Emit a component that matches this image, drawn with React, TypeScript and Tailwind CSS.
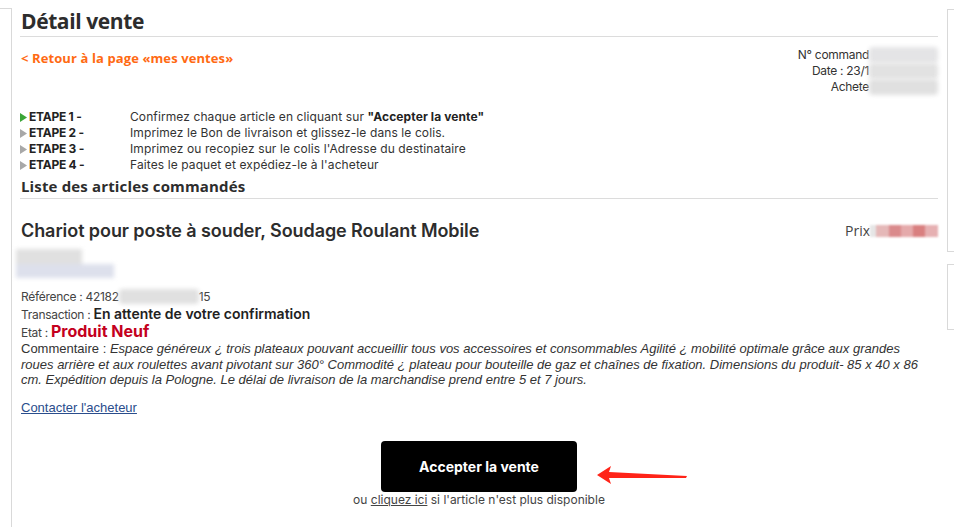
import React from "react";

function Tri({ green }: { green?: boolean }) {
  return (
    <svg width="7" height="9" viewBox="0 0 7 9" className="mr-[2px] shrink-0">
      <path d="M0 0 L7 4.5 L0 9 Z" fill={green ? "#3aa538" : "#a8a8a8"} />
    </svg>
  );
}

function Step({ n, green, children }: { n: number; green?: boolean; children: React.ReactNode }) {
  return (
    <div className="flex items-center h-[16px]">
      <div className="flex items-center w-[110px]" style={{ letterSpacing: "-0.25px" }}>
        <Tri green={green} />
        <span className="font-bold text-[#222]">ETAPE {n} -</span>
      </div>
      <div className="text-[#333]" style={{ letterSpacing: "0.1px" }}>{children}</div>
    </div>
  );
}

export default function App() {
  return (
    <div
      className="w-[954px] h-[527px] overflow-hidden bg-white flex text-[#333]"
      style={{ fontFamily: "Inter, 'Liberation Sans', sans-serif" }}
    >
      {/* left cut-off panel */}
      <div className="w-[12px] shrink-0 mt-[8px] border-t border-r border-[#d9d9d9]" />

      {/* main */}
      <div className="w-[926px] shrink-0 pl-[8px] pt-[8px]">
        <h1
          className="text-[21px] leading-[26px] font-bold text-[#2d2d2d] pb-[2px] border-b border-[#dcdcdc] pl-[1px]"
          style={{ fontFamily: "'Open Sans', sans-serif", letterSpacing: "-0.4px" }}
        >
          Détail vente
        </h1>

        <div className="flex justify-between">
          <a
            className="mt-[12px] text-[13px] leading-[18px] font-bold text-[#ff6a13] pl-[1px]"
            style={{ fontFamily: "'Open Sans', sans-serif", letterSpacing: "0.1px" }}
          >
            &lt; Retour à la page «mes ventes»
          </a>
          <div className="mt-[10px] text-[12px] leading-[16px] text-right text-[#333]" style={{ letterSpacing: "-0.3px" }}>
            <div className="flex justify-end items-center">
              <span>N° command</span>
              <span className="inline-block w-[69px] h-[16px] bg-[#e4e4e6] blur-[2px] rounded" />
            </div>
            <div className="flex justify-end items-center">
              <span>Date : 23/1</span>
              <span className="inline-block w-[69px] h-[16px] bg-[#e2e2e2] blur-[2px] rounded" />
            </div>
            <div className="flex justify-end items-center">
              <span>Achete</span>
              <span className="inline-block w-[69px] h-[16px] bg-[#e0e0e0] blur-[2px] rounded" />
            </div>
          </div>
        </div>

        <div className="mt-[14px] text-[12px] leading-[16px]">
          <Step n={1} green>
            Confirmez chaque article en cliquant sur <b className="text-[#222]">"Accepter la vente"</b>
          </Step>
          <Step n={2}>Imprimez le Bon de livraison et glissez-le dans le colis.</Step>
          <Step n={3}>Imprimez ou recopiez sur le colis l'Adresse du destinataire</Step>
          <Step n={4}>Faites le paquet et expédiez-le à l'acheteur</Step>
        </div>

        <h2
          className="mt-[3px] text-[15px] leading-[20px] font-bold text-[#2d2d2d] pb-[2px] border-b border-[#dcdcdc] pl-[1px]"
          style={{ fontFamily: "'Open Sans', sans-serif", letterSpacing: "0.15px" }}
        >
          Liste des articles commandés
        </h2>

        <div className="flex justify-between items-start mt-[20px]">
          <div className="text-[18px] leading-[24px] font-semibold text-[#2d2d2d] pl-[1px]" style={{ letterSpacing: "-0.08px" }}>
            Chariot pour poste à souder, Soudage Roulant Mobile
          </div>
          <div className="flex items-center text-[14px] leading-[24px] text-[#444]" style={{ fontFamily: "'Open Sans', sans-serif" }}>
            <span>Prix</span>
            <span className="inline-flex h-[12px] blur-[1px]">
              <span className="w-[6px] bg-[#e6e6e6]" />
              <span className="w-[13px] bg-[#e5b8b8]" />
              <span className="w-[12px] bg-[#da8a8c]" />
              <span className="w-[12px] bg-[#e5aaab]" />
              <span className="w-[12px] bg-[#d98080]" />
              <span className="w-[13px] bg-[#e6b0b2]" />
            </span>
          </div>
        </div>

        <div className="mt-[6px] ml-[-4px] w-[100px] h-[30px] flex flex-col blur-[2px]">
          <span className="w-[66px] h-[15px] bg-[#e0e0e0]" />
          <span className="w-[98px] h-[14px] bg-[#dde0ec]" />
        </div>

        <div className="mt-[9px] text-[12px] pl-[1px]">
          <div className="flex items-center h-[17px] text-[#444]" style={{ letterSpacing: "-0.3px" }}>
            <span>Référence : 42182</span>
            <span className="inline-block w-[80px] h-[15px] bg-[#e0e0e0] blur-[2px] rounded" />
            <span>15</span>
          </div>
          <div className="flex items-baseline h-[17px] leading-[17px]">
            <span className="text-[#444] whitespace-pre" style={{ letterSpacing: "-0.3px" }}>Transaction : </span>
            <span className="font-semibold text-[14px] text-[#222]">En attente de votre confirmation</span>
          </div>
          <div className="flex items-baseline h-[19px] leading-[18px]">
            <span className="text-[#444] whitespace-pre" style={{ letterSpacing: "-0.3px" }}>Etat : </span>
            <span className="font-bold text-[16px] text-[#c4001d]">Produit Neuf</span>
          </div>
          <div
            className="text-[13px] leading-[15.5px] text-[#333]"
            style={{ fontFamily: "'Liberation Sans', Arial, sans-serif" }}
          >
            Commentaire : <i>Espace généreux ¿ trois plateaux pouvant accueillir tous vos accessoires et consommables Agilité ¿ mobilité optimale grâce aux grandes</i>
            <br />
            <i>roues arrière et aux roulettes avant pivotant sur 360° Commodité ¿ plateau pour bouteille de gaz et chaînes de fixation. Dimensions du produit- 85 x 40 x 86</i>
            <br />
            <i>cm. Expédition depuis la Pologne. Le délai de livraison de la marchandise prend entre 5 et 7 jours.</i>
          </div>
          <a
            className="block mt-[12px] text-[13px] leading-[16px] underline text-[#2a4d8c]"
            style={{ fontFamily: "'Liberation Sans', Arial, sans-serif" }}
          >
            Contacter l'acheteur
          </a>
        </div>

        <div className="flex flex-col items-center mt-[25px] relative">
          <button className="w-[196px] h-[51px] bg-black text-white rounded-[4px] text-[14px] font-bold">
            Accepter la vente
          </button>
          <div className="text-[12px] leading-[16px] text-[#444]">
            ou <span className="underline">cliquez ici</span> si l'article n'est plus disponible
          </div>
          <svg
            className="absolute left-[577px] top-[24px]"
            width="92"
            height="20"
            viewBox="0 0 92 20"
          >
            <path d="M0 10 L14 1 L12 7 L90 11 L89 13 L12 13 L14 19 Z" fill="#ff2418" />
          </svg>
        </div>
      </div>

      {/* right cut-off panels */}
      <div className="flex-1 pl-[9px] flex flex-col">
        <div className="mt-[9px] h-[243px] border-t border-l border-b border-[#d9d9d9]" />
        <div className="mt-[12px] h-[66px] border-t border-l border-b border-[#d9d9d9]" />
      </div>
    </div>
  );
}
